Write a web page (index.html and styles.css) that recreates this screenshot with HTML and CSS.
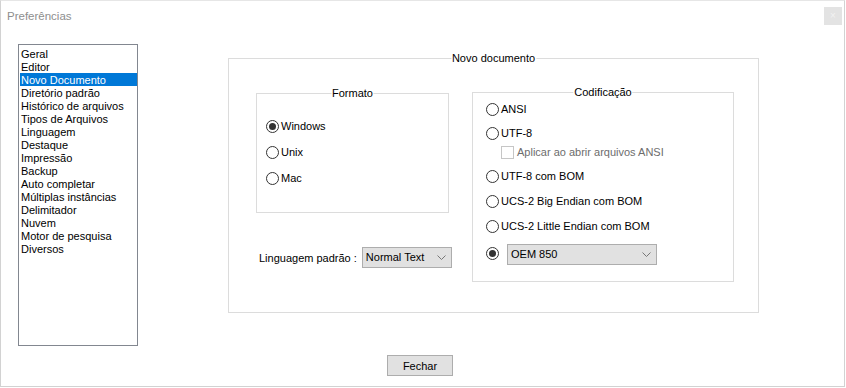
FILE: index.html
```html
<!DOCTYPE html>
<html lang="pt">
<head>
<meta charset="utf-8">
<title>Preferências</title>
<link rel="stylesheet" href="styles.css">
</head>
<body>
<div class="window">
  <div class="titlebar">
    <span class="title">Preferências</span>
    <span class="close">×</span>
  </div>
  <div class="content">
    <ul class="nav">
      <li>Geral</li>
      <li>Editor</li>
      <li class="active">Novo Documento</li>
      <li>Diretório padrão</li>
      <li>Histórico de arquivos</li>
      <li>Tipos de Arquivos</li>
      <li>Linguagem</li>
      <li>Destaque</li>
      <li>Impressão</li>
      <li>Backup</li>
      <li>Auto completar</li>
      <li>Múltiplas instâncias</li>
      <li>Delimitador</li>
      <li>Nuvem</li>
      <li>Motor de pesquisa</li>
      <li>Diversos</li>
    </ul>
    <div class="group outer">
      <span class="group-title">Novo documento</span>
      <div class="col-left">
        <div class="group formato">
          <span class="group-title">Formato</span>
          <div class="radio-row"><span class="radio checked"></span>Windows</div>
          <div class="radio-row"><span class="radio"></span>Unix</div>
          <div class="radio-row"><span class="radio"></span>Mac</div>
        </div>
        <div class="lang-row">
          <span class="lang-label">Linguagem padrão :</span>
          <div class="select lang-select">
            <span>Normal Text</span>
            <svg class="chev" width="9" height="5" viewBox="0 0 9 5"><polyline points="0.5,0.5 4.5,4.5 8.5,0.5" fill="none" stroke="#777" stroke-width="1"/></svg>
          </div>
        </div>
      </div>
      <div class="group codif">
        <span class="group-title">Codificação</span>
        <div class="radio-row r-ansi"><span class="radio"></span>ANSI</div>
        <div class="radio-row r-utf8"><span class="radio"></span>UTF-8</div>
        <div class="check-row"><span class="check"></span>Aplicar ao abrir arquivos ANSI</div>
        <div class="radio-row r-bom"><span class="radio"></span>UTF-8 com BOM</div>
        <div class="radio-row r-big"><span class="radio"></span>UCS-2 Big Endian com BOM</div>
        <div class="radio-row r-little"><span class="radio"></span>UCS-2 Little Endian com BOM</div>
        <div class="oem-row">
          <span class="radio checked"></span>
          <div class="select oem-select">
            <span>OEM 850</span>
            <svg class="chev" width="9" height="5" viewBox="0 0 9 5"><polyline points="0.5,0.5 4.5,4.5 8.5,0.5" fill="none" stroke="#777" stroke-width="1"/></svg>
          </div>
        </div>
      </div>
    </div>
  </div>
  <div class="footer">
    <button class="btn" type="button">Fechar</button>
  </div>
</div>
</body>
</html>
```
FILE: styles.css
```css
* { box-sizing: border-box; }
html, body { margin: 0; padding: 0; background: #fff; }
body {
  width: 846px;
  height: 388px;
  overflow: hidden;
  font-family: "Liberation Sans", Arial, sans-serif;
  font-size: 11px;
  color: #000;
}
.window {
  width: 845px;
  height: 387px;
  border: 1px solid #d2d2d2;
  border-top-color: #e6e6e6;
  display: flex;
  flex-direction: column;
}
.titlebar {
  height: 30px;
  display: flex;
  justify-content: space-between;
  align-items: flex-start;
  padding: 0 2px 0 6px;
}
.title {
  margin-top: 8px;
  font-size: 11.5px;
  line-height: 14px;
  color: #8e8e8e;
}
.close {
  width: 18px;
  height: 18px;
  margin-top: 6px;
  background: #e3e3e3;
  color: #f2f2f2;
  font-size: 10px;
  line-height: 18px;
  text-align: center;
}
.content {
  display: flex;
  align-items: flex-start;
  padding: 13px 0 0 17px;
}
.nav {
  list-style: none;
  margin: 0;
  width: 120px;
  height: 302px;
  border: 1px solid #828790;
  padding: 2px 0 2px 1px;
  flex: none;
}
.nav li {
  height: 13px;
  line-height: 14px;
  padding-left: 1px;
  white-space: nowrap;
}
.nav li.active { background: #0078d7; color: #fff; }

.group {
  position: relative;
  border: 1px solid #dcdcdc;
  flex: none;
}
.group-title {
  position: absolute;
  top: -7px;
  left: 50%;
  transform: translateX(-50%);
  background: #fff;
  padding: 0 1px;
  line-height: 13px;
  white-space: nowrap;
}
.outer {
  margin: 14px 0 0 90px;
  width: 531px;
  height: 255px;
  display: flex;
  align-items: flex-start;
  padding: 34px 0 0 27px;
}
.col-left {
  width: 193px;
  display: flex;
  flex-direction: column;
  flex: none;
}
.formato {
  width: 193px;
  height: 120px;
  padding: 26px 0 0 9px;
  display: flex;
  flex-direction: column;
  gap: 13px;
}
.radio-row {
  display: flex;
  align-items: center;
  height: 13px;
  line-height: 13px;
  white-space: nowrap;
}
.radio {
  width: 13px;
  height: 13px;
  border: 1px solid #333;
  border-radius: 50%;
  background: #fff;
  display: inline-flex;
  align-items: center;
  justify-content: center;
  margin-right: 2px;
  flex: none;
}
.radio.checked::after {
  content: "";
  width: 7px;
  height: 7px;
  border-radius: 50%;
  background: #333;
}
.lang-row {
  margin-top: 34px;
  padding-left: 3px;
  display: flex;
  align-items: center;
  gap: 5px;
  white-space: nowrap;
}
.lang-label { flex: none; }
.select {
  display: flex;
  align-items: center;
  justify-content: space-between;
  border: 1px solid #adadad;
  background: #e1e1e1;
  padding: 0 5px 0 3px;
  line-height: 13px;
  flex: none;
}
.lang-select { width: 90px; height: 21px; }
.oem-select { width: 150px; height: 21px; margin-left: 8px; }
.chev { display: block; flex: none; }

.codif {
  margin: -1px 0 0 23px;
  width: 262px;
  height: 190px;
  padding: 10px 0 0 13px;
  display: flex;
  flex-direction: column;
}
.r-utf8 { margin-top: 11px; }
.check-row {
  display: flex;
  align-items: center;
  height: 13px;
  line-height: 13px;
  margin: 6px 0 0 15px;
  color: #6d6d6d;
  white-space: nowrap;
}
.check {
  width: 13px;
  height: 13px;
  border: 1px solid #c6c6c6;
  background: #fff;
  margin-right: 3px;
  flex: none;
}
.r-bom { margin-top: 11px; }
.r-big { margin-top: 12px; }
.r-little { margin-top: 12px; }
.oem-row {
  margin-top: 11px;
  display: flex;
  align-items: center;
}
.oem-row .radio { margin-right: 0; margin-top: -2px; }

.footer {
  margin-top: 9px;
  padding-left: 386px;
}
.btn {
  width: 66px;
  height: 21px;
  border: 1px solid #adadad;
  background: #e1e1e1;
  font-family: "Liberation Sans", Arial, sans-serif;
  font-size: 11px;
  color: #000;
  padding: 0;
  margin: 0;
}
```
